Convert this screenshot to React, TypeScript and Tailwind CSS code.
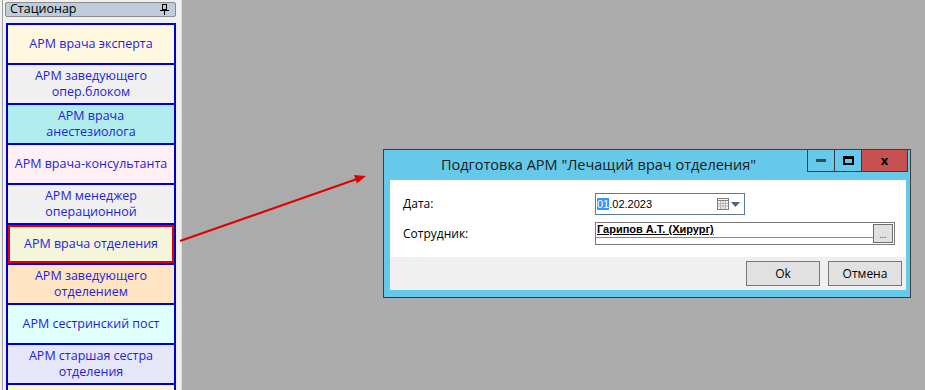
import React from "react"

const cards = [
  { lines: ["АРМ врача эксперта"], bg: "bg-[#fff8e1]" },
  { lines: ["АРМ заведующего", "опер.блоком"], bg: "bg-[#f0f0f0]" },
  { lines: ["АРМ врача", "анестезиолога"], bg: "bg-[#b0ecee]" },
  { lines: ["АРМ врача-консультанта"], bg: "bg-[#fff0f5]" },
  { lines: ["АРМ менеджер", "операционной"], bg: "bg-[#f0f0f0]" },
  { lines: ["АРМ врача отделения"], bg: "bg-[#f5f5dc]", selected: true },
  { lines: ["АРМ заведующего", "отделением"], bg: "bg-[#ffe4c4]" },
  { lines: ["АРМ сестринский пост"], bg: "bg-[#e0ffff]" },
  { lines: ["АРМ старшая сестра", "отделения"], bg: "bg-[#e6e6fa]" },
  { lines: [""], bg: "bg-[#fff5d0]" },
]

function PinIcon() {
  return (
    <svg width="9" height="11" viewBox="0 0 9 11" fill="none">
      <rect x="2.5" y="0.5" width="4" height="5" stroke="#000" />
      <line x1="0" y1="6.5" x2="9" y2="6.5" stroke="#000" />
      <line x1="4.5" y1="7" x2="4.5" y2="11" stroke="#000" />
    </svg>
  )
}

function CalendarIcon() {
  return (
    <svg width="12" height="12" viewBox="0 0 12 12" fill="none">
      <rect x="0.5" y="0.5" width="11" height="11" fill="#f4f4f4" stroke="#7f7f7f" />
      <line x1="0.5" y1="2.5" x2="11.5" y2="2.5" stroke="#7f7f7f" />
      <line x1="3.5" y1="3" x2="3.5" y2="11" stroke="#b5b5b5" />
      <line x1="6" y1="3" x2="6" y2="11" stroke="#b5b5b5" />
      <line x1="8.5" y1="3" x2="8.5" y2="11" stroke="#b5b5b5" />
      <line x1="1" y1="5.5" x2="11" y2="5.5" stroke="#b5b5b5" />
      <line x1="1" y1="8" x2="11" y2="8" stroke="#b5b5b5" />
    </svg>
  )
}

function Card({ lines, bg, selected }: { lines: string[]; bg: string; selected?: boolean }) {
  return (
    <div className={`h-[40px] shrink-0 border-b-2 border-[#0000cc] ${bg}`}>
      <div
        className={`h-full flex flex-col items-center justify-center pt-px text-[12.5px] leading-[16px] text-[#2424d4] ${
          selected ? "border-2 border-[#e00000]" : ""
        }`}
      >
        {lines.map((l, i) => (
          <span key={i}>{l}</span>
        ))}
      </div>
    </div>
  )
}

export default function App() {
  return (
    <div
      className="relative w-[925px] h-[390px] overflow-hidden bg-[#ababab] flex"
      style={{ fontFamily: '"Open Sans", "Noto Sans", sans-serif' }}
    >
      {/* left panel */}
      <div className="w-[182px] h-full bg-[#f0f0f0] border-r border-[#dcdcdc] flex shrink-0">
        <div className="w-[2px]" />
        <div className="w-px bg-[#a0a0a0]" />
        <div className="w-[2px]" />
        <div className="w-[171px] flex flex-col">
          <div className="mt-[2px] h-[17px] bg-[#bfcddb] border border-[#8c8c8c] rounded-[2px] flex items-center justify-between pl-[4px] pr-[6px]">
            <span className="text-[12.5px] leading-none text-black">Стационар</span>
            <PinIcon />
          </div>
          <div className="mt-[6px] ml-px flex flex-col border-t-2 border-x-2 border-[#0000cc]">
            {cards.map((c, i) => (
              <Card key={i} lines={c.lines} bg={c.bg} selected={c.selected} />
            ))}
          </div>
        </div>
      </div>

      {/* dialog window */}
      <div className="absolute left-[383px] top-[149px] w-[528px] h-[149px] bg-[#66c9ea] border border-[#3b3b3b] flex flex-col">
        <div className="h-[30px] flex">
          <div className="flex-1 pl-[6px] pt-[4px] text-center text-[14.5px] text-[#1a1a1a]">
            Подготовка АРМ "Лечащий врач отделения"
          </div>
          <div className="flex h-[22px] mr-[2px]">
            <div className="w-[28px] border border-t-0 border-[#3b3b3b] flex items-center justify-center">
              <div className="w-[10px] h-[3px] bg-[#2f4a5a]" />
            </div>
            <div className="w-[26px] border-b border-[#3b3b3b] flex items-center justify-center">
              <div className="w-[11px] h-[9px] border-2 border-black border-t-[3px]" />
            </div>
            <div className="w-[47px] bg-[#c75050] border border-t-0 border-[#3b3b3b] flex items-center justify-center text-[13px] font-bold text-black leading-none">
              x
            </div>
          </div>
        </div>

        <div className="ml-[6px] w-[516px] flex flex-col">
          <div className="h-[77px] bg-white pt-[13px] pl-[13px] flex flex-col gap-[7px]">
            <div className="flex items-center h-[22px]">
              <span className="w-[192px] text-[12px] text-black">Дата:</span>
              <div className="w-[150px] h-[22px] border border-[#5c7a99] flex items-center pl-[1px] pr-[4px]">
                <span className="text-[11px] leading-[14px] text-black" style={{ fontFamily: '"Liberation Sans", sans-serif' }}>
                  <span className="bg-[#3399ff] text-white">01</span>.02.2023
                </span>
                <div className="flex-1" />
                <CalendarIcon />
                <svg width="9" height="5" viewBox="0 0 9 5" className="ml-[2px]">
                  <polygon points="0,0 9,0 4.5,5" fill="#4d6680" />
                </svg>
              </div>
            </div>
            <div className="flex items-center h-[23px]">
              <span className="w-[192px] text-[12px] text-black">Сотрудник:</span>
              <div className="w-[300px] h-[23px] border border-[#7a7a7a] flex items-start">
                <div
                  className="flex-1 h-[15px] border-b border-[#8c8c8c] pl-[1px] text-[11px] leading-[13px] font-bold underline text-black"
                  style={{ fontFamily: '"Liberation Sans", sans-serif' }}
                >
                  Гарипов А.Т. (Хирург)
                </div>
                <div className="mt-px mr-px w-[20px] h-[19px] bg-[#e1e1e1] border border-[#6e6e6e] flex items-end justify-center pb-[3px] text-[9px] leading-none text-[#333]">
                  ...
                </div>
              </div>
            </div>
          </div>
          <div className="h-[33px] bg-[#f0f0f0] flex items-start justify-end gap-[8px] pt-[4px] pr-[4px]">
            <div className="w-[74px] h-[25px] bg-[#e1e1e1] border border-[#777] flex items-center justify-center text-[12px] text-black">
              Ok
            </div>
            <div className="w-[74px] h-[25px] bg-[#e1e1e1] border border-[#777] flex items-center justify-center text-[12px] text-black">
              Отмена
            </div>
          </div>
        </div>
      </div>

      {/* red arrow */}
      <svg className="absolute left-0 top-0 pointer-events-none" width="925" height="390">
        <line x1="180" y1="241" x2="357" y2="179" stroke="#e00000" strokeWidth="2" />
        <polygon points="366,176 356.9,183.6 354,175" fill="#e00000" />
      </svg>
    </div>
  )
}
